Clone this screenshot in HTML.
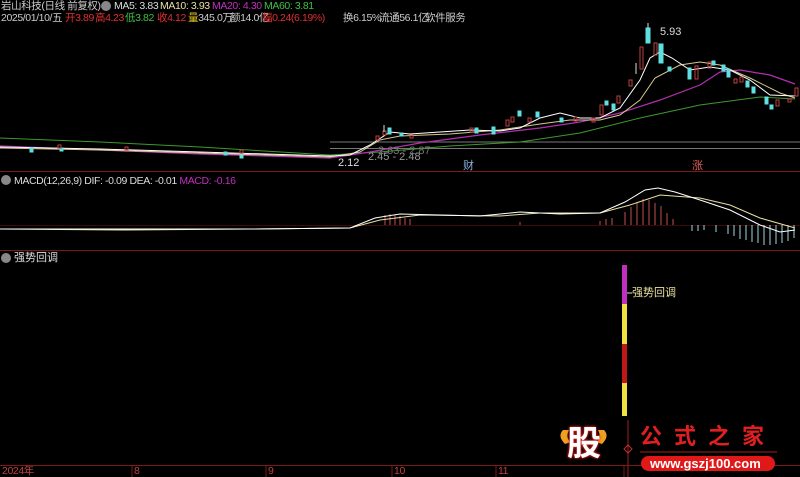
<!DOCTYPE html>
<html><head><meta charset="utf-8"><style>
body{margin:0;background:#000;width:800px;height:477px;overflow:hidden;position:relative;font-family:"Liberation Sans","Noto Sans CJK SC",sans-serif;}
.t{position:absolute;font-size:11px;white-space:nowrap;line-height:12px}
.s{font-size:10.5px;letter-spacing:-0.4px}
</style></head><body>
<svg width="800" height="477" style="position:absolute;left:0;top:0">
<line x1="0" y1="171.5" x2="800" y2="171.5" stroke="#7a1a1a"/>
<line x1="0" y1="250.5" x2="800" y2="250.5" stroke="#7a1a1a"/>
<line x1="0" y1="465.5" x2="800" y2="465.5" stroke="#7a1a1a"/>
<g stroke="#7a1a1a"><line x1="132" y1="465" x2="132" y2="477"/><line x1="266" y1="465" x2="266" y2="477"/><line x1="392" y1="465" x2="392" y2="477"/><line x1="496" y1="465" x2="496" y2="477"/><line x1="624" y1="465" x2="624" y2="477"/></g>
<line x1="330" y1="142" x2="800" y2="142" stroke="#777"/>
<line x1="330" y1="148.5" x2="800" y2="148.5" stroke="#777"/>
<polyline fill="none" stroke="#3c9a2c" stroke-width="1" points="0,138 100,142 200,147 330,155 380,152 450,146 520,142 580,133 640,118 700,105 760,97 795,99"/>
<polyline fill="none" stroke="#b030b0" stroke-width="1.2" points="0,146 100,150 200,154 330,158 370,152 420,143 480,135 540,128 580,122 620,113 660,100 700,85 720,72 740,70 770,75 795,84"/>
<polyline fill="none" stroke="#d8c890" stroke-width="1" points="0,148 100,150 200,153 330,157 360,152 380,140 400,136 450,134 500,130 540,124 570,120 600,120 620,115 640,100 655,78 680,65 700,62 720,65 750,78 780,93 795,98"/>
<polyline fill="none" stroke="#fff" stroke-width="1" points="0,147 100,149 200,152 330,156 350,155 370,145 390,132 410,134 440,132 470,130 500,131 520,128 540,118 560,113 580,118 600,118 620,108 640,80 650,58 660,52 672,58 690,70 710,67 730,70 750,80 770,95 795,96"/>
<g fill="#5fe0e0" stroke="#5fe0e0">
<rect x="388" y="128" width="3" height="6"/><rect x="400" y="133" width="3" height="3"/><rect x="475" y="128" width="3" height="5"/><rect x="492" y="127" width="3" height="7"/><rect x="518" y="111" width="3" height="5"/><rect x="536" y="112" width="3" height="5"/><rect x="560" y="118" width="3" height="4"/><rect x="605" y="101" width="3" height="4"/><rect x="612" y="104" width="3" height="6"/><rect x="646" y="28" width="4" height="15"/><rect x="659" y="44" width="4" height="19"/><rect x="668" y="67" width="3" height="4"/><rect x="688" y="68" width="3" height="11"/><rect x="712" y="61" width="3" height="4"/><rect x="722" y="65" width="3" height="6"/><rect x="727" y="69" width="3" height="8"/><rect x="746" y="81" width="3" height="6"/><rect x="752" y="87" width="3" height="6"/><rect x="765" y="97" width="3" height="7"/><rect x="770" y="105" width="3" height="4"/>
<rect x="30" y="148" width="3" height="4"/><rect x="60" y="148" width="3" height="3"/><rect x="224" y="152" width="3" height="3"/><rect x="240" y="155" width="3" height="3"/>
</g>
<g fill="none" stroke="#c04040">
<rect x="376" y="136" width="3" height="4"/><rect x="383" y="131" width="3" height="4"/><rect x="410" y="135" width="3" height="3"/><rect x="470" y="128" width="3" height="4"/><rect x="506" y="120" width="3" height="6"/><rect x="511" y="117" width="3" height="5"/><rect x="528" y="118" width="3" height="4"/><rect x="574" y="117" width="3" height="4"/><rect x="592" y="118" width="3" height="4"/><rect x="600" y="105" width="3" height="10"/><rect x="617" y="96" width="3" height="7"/><rect x="629" y="80" width="3" height="6"/><rect x="640" y="47" width="3" height="22"/><rect x="654" y="43" width="3" height="12"/><rect x="695" y="66" width="3" height="13"/><rect x="708" y="62" width="3" height="6"/><rect x="734" y="79" width="3" height="4"/><rect x="740" y="77" width="3" height="5"/><rect x="776" y="100" width="3" height="6"/><rect x="788" y="99" width="3" height="3"/><rect x="795" y="88" width="3" height="8"/>
<rect x="58" y="145" width="3" height="3"/><rect x="125" y="147" width="3" height="3"/><rect x="240" y="150" width="3" height="3"/>
</g>
<g stroke="#ddd"><line x1="384" y1="125" x2="384" y2="132"/><line x1="648" y1="23" x2="648" y2="28"/><line x1="636" y1="63" x2="636" y2="74"/></g>
<line x1="0" y1="225.5" x2="800" y2="225.5" stroke="#3a0a0a"/>
<g stroke="#c05050" stroke-width="1">
<line x1="385" y1="225" x2="385" y2="215"/><line x1="390" y1="225" x2="390" y2="214"/><line x1="395" y1="225" x2="395" y2="215"/><line x1="400" y1="225" x2="400" y2="216"/><line x1="405" y1="225" x2="405" y2="218"/><line x1="410" y1="225" x2="410" y2="219"/><line x1="520" y1="225" x2="520" y2="222"/><line x1="600" y1="225" x2="600" y2="221"/><line x1="606" y1="225" x2="606" y2="219"/><line x1="612" y1="225" x2="612" y2="218"/><line x1="625" y1="225" x2="625" y2="212"/><line x1="631" y1="225" x2="631" y2="207"/><line x1="637" y1="225" x2="637" y2="203"/><line x1="643" y1="225" x2="643" y2="199"/><line x1="649" y1="225" x2="649" y2="200"/><line x1="655" y1="225" x2="655" y2="203"/><line x1="661" y1="225" x2="661" y2="206"/><line x1="667" y1="225" x2="667" y2="213"/><line x1="673" y1="225" x2="673" y2="219"/>
</g>
<g stroke="#a0d8e0" stroke-width="1">
<line x1="692" y1="225" x2="692" y2="231"/><line x1="698" y1="225" x2="698" y2="231"/><line x1="704" y1="225" x2="704" y2="230"/><line x1="716" y1="225" x2="716" y2="232"/><line x1="728" y1="225" x2="728" y2="234"/><line x1="734" y1="225" x2="734" y2="236"/><line x1="740" y1="225" x2="740" y2="239"/><line x1="746" y1="225" x2="746" y2="240"/><line x1="752" y1="225" x2="752" y2="242"/><line x1="758" y1="225" x2="758" y2="243"/><line x1="764" y1="225" x2="764" y2="245"/><line x1="770" y1="225" x2="770" y2="245"/><line x1="776" y1="225" x2="776" y2="244"/><line x1="782" y1="225" x2="782" y2="243"/><line x1="788" y1="225" x2="788" y2="241"/><line x1="794" y1="225" x2="794" y2="238"/>
</g>
<polyline fill="none" stroke="#e8e0a0" points="0,229 120,230 250,229 350,228 380,220 420,215 500,216 540,213 600,213 630,205 660,195 700,198 730,205 760,218 795,228"/>
<polyline fill="none" stroke="#fff" points="0,229 120,229 250,229 350,228 375,218 400,214 480,216 520,212 560,214 600,213 625,202 645,190 658,188 675,192 700,200 730,210 760,225 780,232 795,230"/>
<rect x="622" y="265" width="5" height="39" fill="#c030c0"/>
<rect x="622" y="304" width="5" height="40" fill="#f0e040"/>
<rect x="622" y="344" width="5" height="39" fill="#c01818"/>
<rect x="622" y="383" width="5" height="33" fill="#f0e040"/>
<line x1="627" y1="293" x2="632" y2="293" stroke="#ddd"/>
<circle cx="106" cy="6" r="5" fill="#888"/><circle cx="6" cy="180" r="5" fill="#888"/><circle cx="6" cy="258" r="5" fill="#888"/>
<line x1="628" y1="420" x2="628" y2="477" stroke="#a02020"/>
<path d="M628 445 l4 4 -4 4 -4 -4z" fill="none" stroke="#c03030"/>
<line x1="640" y1="452" x2="777" y2="452" stroke="#a02020"/>
<rect x="641" y="456" width="134" height="15" rx="7.5" fill="#e01818"/>
<path d="M563 430 q-6 6 2 14 l6 -2 q-6 -4 -2 -12z M604 430 q6 6 -2 14 l-6 -2 q6 -4 2 -12z" fill="#f0a020"/>
</svg>
<div class="t s" style="left:1px;top:0;color:#ccc">岩山科技(日线 前复权)</div>
<div class="t s" style="left:114px;top:0;color:#ddd">MA5: 3.83</div>
<div class="t s" style="left:160px;top:0;color:#e8e0a0">MA10: 3.93</div>
<div class="t s" style="left:212px;top:0;color:#c030c0">MA20: 4.30</div>
<div class="t s" style="left:264px;top:0;color:#40c040">MA60: 3.81</div>
<div class="t s" style="left:1px;top:12px;color:#ccc">2025/01/10/五</div>
<div class="t s" style="left:65px;top:12px;color:#e03030">开3.89</div>
<div class="t s" style="left:95px;top:12px;color:#e03030">高4.23</div>
<div class="t s" style="left:125px;top:12px;color:#40c040">低3.82</div>
<div class="t s" style="left:157px;top:12px;color:#e03030">收4.12</div>
<div class="t s" style="left:188px;top:12px;color:#ccc"><span style="color:#e0c020">量</span>345.0万</div>
<div class="t s" style="left:230px;top:12px;color:#ccc">额14.0亿</div>
<div class="t s" style="left:262px;top:12px;color:#e03030">幅0.24(6.19%)</div>
<div class="t s" style="left:343px;top:12px;color:#ccc">换6.15%</div>
<div class="t s" style="left:379px;top:12px;color:#ccc">流通56.1亿</div>
<div class="t s" style="left:425px;top:12px;color:#ccc">软件服务</div>
<div class="t" style="left:660px;top:26px;color:#ddd">5.93</div>
<div class="t" style="left:338px;top:157px;color:#ddd">2.12</div>
<div class="t" style="left:368px;top:151px;color:#999">2.45 - 2.48</div>
<div class="t" style="left:378px;top:145px;color:#777">2.63 - 2.87</div>
<div class="t" style="left:463px;top:160px;color:#8ab0e0">财</div>
<div class="t" style="left:692px;top:160px;color:#e06060">涨</div>
<div class="t s" style="left:14px;top:175px;color:#ddd">MACD(12,26,9) DIF: -0.09 DEA: -0.01 <span style="color:#c030c0">MACD: -0.16</span></div>
<div class="t" style="left:14px;top:252px;color:#ddd">强势回调</div>
<div class="t" style="left:632px;top:287px;color:#e8e0a0">强势回调</div>
<div class="t s" style="left:2px;top:465px;color:#c04040">2024年</div>
<div class="t s" style="left:134px;top:465px;color:#c04040">8</div>
<div class="t s" style="left:268px;top:465px;color:#c04040">9</div>
<div class="t s" style="left:394px;top:465px;color:#c04040">10</div>
<div class="t s" style="left:498px;top:465px;color:#c04040">11</div>
<div class="t" style="left:567px;top:424px;font-size:34px;line-height:40px;font-weight:bold;color:#fff;text-shadow:0 0 3px #e02020,0 0 2px #e02020">股</div>
<div class="t" style="left:640px;top:424px;font-size:22px;line-height:26px;font-weight:bold;color:#e02020;letter-spacing:12px">公式之家</div>
<div class="t" style="left:650px;top:457px;font-size:13px;line-height:14px;font-weight:bold;color:#fff">www.gszj100.com</div>
</body></html>
